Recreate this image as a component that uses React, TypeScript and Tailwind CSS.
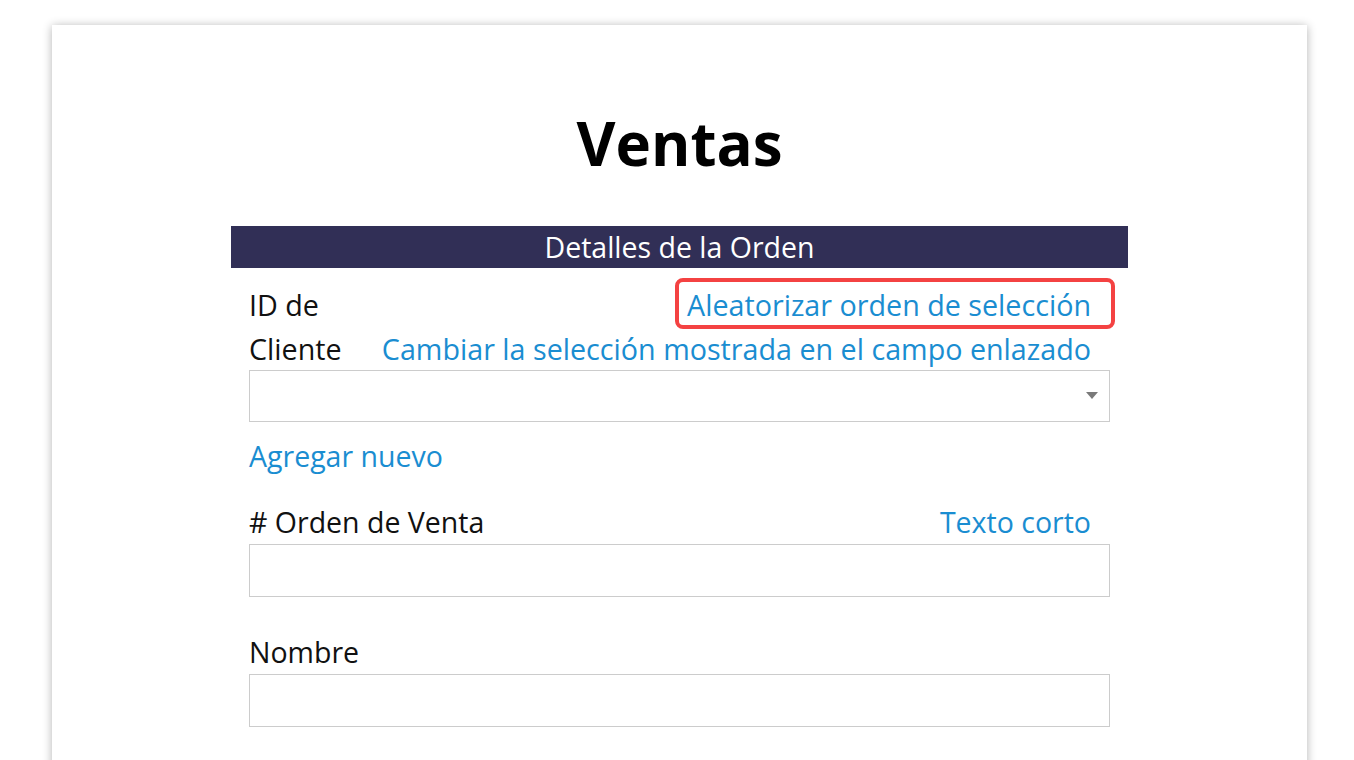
const font = { fontFamily: '"Open Sans", "Liberation Sans", sans-serif' }

export default function App() {
  return (
    <div className="h-[760px] overflow-hidden bg-white" style={font}>
      <div className="ml-[52px] mt-[25px] h-[800px] w-[1255px] bg-white pt-[88px] shadow-[0_1px_9px_rgba(0,0,0,0.3)]">
        <h1 className="text-center text-[60px] font-bold leading-[60px] text-black">
          Ventas
        </h1>

        <div className="mx-auto mt-[53px] w-[897px]">
          <div className="flex h-[42px] items-center justify-center bg-[#312f56] text-[28.5px] text-white">
            Detalles de la Orden
          </div>

          <div className="px-[18px]">
            <div className="mt-[15px] flex text-[28.7px] leading-[44px]">
              <div className="w-[130px] shrink-0 text-[#111]">
                ID de
                <br />
                Cliente
              </div>
              <div className="flex flex-1 flex-col items-end pr-[19px] text-[#1a8dd1]">
                <span className="relative">
                  Aleatorizar orden de selección
                  <span className="absolute -top-[5px] -bottom-[2px] -left-[12px] -right-[24px] rounded-lg border-4 border-[#f44242]" />
                </span>
                <span>Cambiar la selección mostrada en el campo enlazado</span>
              </div>
            </div>

            <div className="relative -mt-px h-[52px] border border-[#cccccc]">
              <span className="absolute right-[11px] top-[21px] h-0 w-0 border-x-[6px] border-t-[7px] border-x-transparent border-t-[#7a7a7a]" />
            </div>

            <div className="mt-[12px] text-[28.5px] leading-[44px] text-[#1a8dd1]">
              Agregar nuevo
            </div>

            <div className="mt-[23px] flex justify-between pr-[19px] text-[28.5px] leading-[43px]">
              <span className="text-[#111]"># Orden de Venta</span>
              <span className="text-[#1a8dd1]">Texto corto</span>
            </div>
            <div className="h-[53px] border border-[#cccccc]" />

            <div className="mt-[34px] text-[28.5px] leading-[43px] text-[#111]">
              Nombre
            </div>
            <div className="h-[53px] border border-[#cccccc]" />
          </div>
        </div>
      </div>
    </div>
  )
}
